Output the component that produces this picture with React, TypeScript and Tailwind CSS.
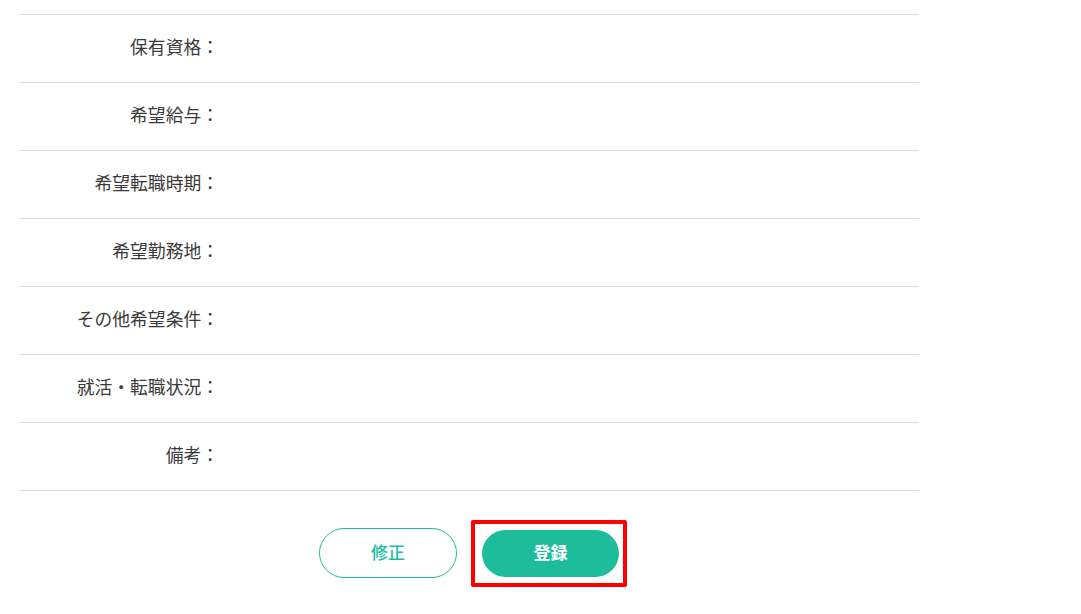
import React from "react";

const labels = [
  "保有資格：",
  "希望給与：",
  "希望転職時期：",
  "希望勤務地：",
  "その他希望条件：",
  "就活・転職状況：",
  "備考：",
];

export default function App() {
  return (
    <div
      className="w-[1081px] h-[614px] bg-white overflow-hidden text-[#3a3a3a]"
      style={{ fontFamily: '"Noto Sans CJK JP", "Noto Sans", sans-serif' }}
    >
      <div className="ml-[19px] w-[900px] pt-[14px]">
        <div className="border-b border-[#dddddd]">
          {labels.map((l) => (
            <div key={l} className="flex items-center h-[68px] border-t border-[#dddddd]">
              <div className="w-[200px] text-right text-[17.8px] leading-none pb-[3px]">{l}</div>
              <div className="flex-1" />
            </div>
          ))}
        </div>
        <div className="flex justify-center items-center gap-[25px] mt-[37px]">
          <button className="w-[138px] h-[50px] rounded-full border border-[#1dbd9c] bg-white text-[#1dbd9c] text-[17px] font-medium leading-none pb-[3px]">
            修正
          </button>
          <div className="relative">
            <button className="w-[137px] h-[47px] rounded-full bg-[#1dbd9c] text-white text-[17px] font-bold leading-none pb-[3px]">
              登録
            </button>
            <div className="absolute left-[-11px] top-[-10px] w-[156px] h-[67px] border-4 border-[#ff0000] rounded-[2px] pointer-events-none" />
          </div>
        </div>
      </div>
    </div>
  );
}
